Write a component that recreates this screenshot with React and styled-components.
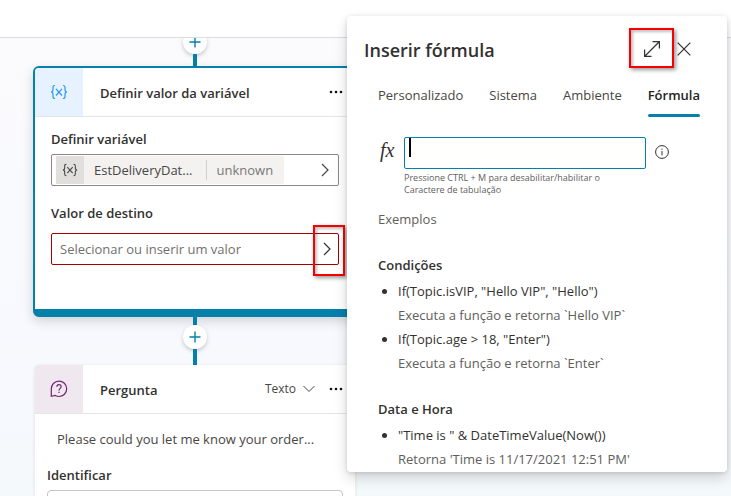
import styled, { createGlobalStyle } from "styled-components";

export default function App() {
  return (
    <>
      <GlobalStyle />
      <Page>
        <TopBar />
        <Canvas>
          <Flow>
            <AddStep before={0} after={12} clipped />
            <SelectedCard>
              <CardHeader>
                <CardIcon $background="#e6f2ff" $color="#2f96f3">
                  <VariableIcon size={18} />
                </CardIcon>
                <CardTitle>Definir valor da variável</CardTitle>
                <MoreButton />
              </CardHeader>
              <CardBody>
                <Label as="span" id="variable-label">
                  Definir variável
                </Label>
                <VariablePicker aria-labelledby="variable-label">
                  <Token>
                    <TokenIcon>
                      <VariableIcon size={16} />
                    </TokenIcon>
                    <TokenName>EstDeliveryDat...</TokenName>
                    <TokenType>unknown</TokenType>
                  </Token>
                  <ChevronRight />
                </VariablePicker>
                <Label htmlFor="target">Valor de destino</Label>
                <TargetField>
                  <TargetInput
                    id="target"
                    placeholder="Selecionar ou inserir um valor"
                  />
                  <TargetButton aria-label="Abrir seletor">
                    <ChevronRight />
                  </TargetButton>
                </TargetField>
              </CardBody>
            </SelectedCard>
            <AddStep before={8} after={16} />
            <QuestionCard>
              <CardHeader>
                <CardIcon $background="#efe8ef" $color="#742774">
                  <QuestionIcon />
                </CardIcon>
                <CardTitle>Pergunta</CardTitle>
                <TypeButton>
                  Texto
                  <ChevronDown />
                </TypeButton>
                <MoreButton />
              </CardHeader>
              <QuestionBody>
                <Message>Please could you let me know your order...</Message>
                <Label htmlFor="identify">Identificar</Label>
                <IdentifyInput id="identify" />
              </QuestionBody>
            </QuestionCard>
          </Flow>
        </Canvas>
        <FormulaPanel />
      </Page>
    </>
  );
}

const tabs = ["Personalizado", "Sistema", "Ambiente", "Fórmula"];

const examples = [
  {
    title: "Condições",
    items: [
      {
        code: 'If(Topic.isVIP, "Hello VIP", "Hello")',
        result: "Executa a função e retorna `Hello VIP`",
      },
      {
        code: 'If(Topic.age > 18, "Enter")',
        result: "Executa a função e retorna `Enter`",
      },
    ],
  },
  {
    title: "Data e Hora",
    items: [
      {
        code: '"Time is " & DateTimeValue(Now())',
        result: "Retorna 'Time is 11/17/2021 12:51 PM'",
      },
    ],
  },
];

function FormulaPanel() {
  return (
    <Panel>
      <PanelHeader>
        <PanelTitle>Inserir fórmula</PanelTitle>
        <ExpandButton aria-label="Expandir">
          <svg width="16" height="16" viewBox="0 0 16 16" {...stroke}>
            <path d="M1 15 15 1M8.500.6h6.900v6.900M.6 8.500v6.900h6.900" />
          </svg>
        </ExpandButton>
        <CloseButton aria-label="Fechar">
          <svg width="14" height="14" viewBox="0 0 14 14" {...stroke}>
            <path d="m.7.7 12.6 12.6M13.3.7.7 13.3" />
          </svg>
        </CloseButton>
      </PanelHeader>
      <Tabs role="tablist">
        {tabs.map((tab) => (
          <Tab
            key={tab}
            role="tab"
            aria-selected={tab === "Fórmula"}
            $active={tab === "Fórmula"}
          >
            {tab}
          </Tab>
        ))}
      </Tabs>
      <FormulaRow>
        <Fx htmlFor="formula">fx</Fx>
        <FormulaField>
          <FormulaInput id="formula" aria-describedby="formula-hint" />
          <Caret />
          <Hint id="formula-hint">
            Pressione CTRL + M para desabilitar/habilitar o Caractere de
            tabulação
          </Hint>
        </FormulaField>
        <InfoButton aria-label="Informações">
          <svg width="14" height="14" viewBox="0 0 14 14" {...stroke}>
            <circle cx="7" cy="7" r="6.4" strokeWidth="1" />
            <path d="M7 6v4.3M7 3.6v1.2" strokeWidth="1" />
          </svg>
        </InfoButton>
      </FormulaRow>
      <Examples>
        <ExamplesTitle>Exemplos</ExamplesTitle>
        {examples.map(({ title, items }) => (
          <section key={title}>
            <GroupTitle>{title}</GroupTitle>
            <ExampleList>
              {items.map(({ code, result }) => (
                <li key={code}>
                  {code}
                  <Result>{result}</Result>
                </li>
              ))}
            </ExampleList>
          </section>
        ))}
      </Examples>
    </Panel>
  );
}

function AddStep({ before, after, clipped }) {
  return (
    <Connector $clipped={clipped}>
      <Line $height={before} />
      <AddButton aria-label="Adicionar nó">
        <svg width="12" height="12" viewBox="0 0 12 12" {...stroke}>
          <path d="M6 .5v11M.5 6h11" strokeWidth="1.4" />
        </svg>
      </AddButton>
      <Line $height={after} />
    </Connector>
  );
}

const stroke = {
  fill: "none",
  stroke: "currentColor",
  strokeWidth: 1.2,
  "aria-hidden": true,
};

function VariableIcon({ size }) {
  return (
    <svg width={size} height={size} viewBox="0 0 18 18" {...stroke}>
      <path d="M5 2.5c-1.8 0-2 .7-2 2v2C3 8 2.5 9 1 9c1.5 0 2 1 2 2.5v2c0 1.3.2 2 2 2M13 2.5c1.8 0 2 .7 2 2v2C15 8 15.5 9 17 9c-1.5 0-2 1-2 2.5v2c0 1.3-.2 2-2 2" />
      <path d="m6 5.8 6 6.7M12 5.8l-6 6.7" />
    </svg>
  );
}

function QuestionIcon() {
  return (
    <svg width="18" height="18" viewBox="0 0 18 18" {...stroke}>
      <path d="M1.3 16.3V9A7.7 7.7 0 1 1 9 16.5c-1.4 0-2.6-.4-3.7-1z" />
      <path d="M6.9 6.8C6.9 5.4 7.8 4.6 9 4.6s2.2.8 2.2 2c0 1.7-2.2 1.8-2.2 3.9M9 11.7v1.4" />
    </svg>
  );
}

function ChevronRight() {
  return (
    <svg width="8" height="14" viewBox="0 0 8 14" {...stroke}>
      <path d="m1 1 6 6-6 6" />
    </svg>
  );
}

function ChevronDown() {
  return (
    <svg width="12" height="8" viewBox="0 0 12 8" {...stroke} strokeWidth="1">
      <path d="m.5 1 5.5 5.5L11.5 1" />
    </svg>
  );
}

function MoreButton() {
  return (
    <MoreIconButton aria-label="Mais">
      <svg width="14" height="4" viewBox="0 0 14 4" fill="#111" aria-hidden>
        <circle cx="2" cy="2" r="1.3" />
        <circle cx="7" cy="2" r="1.3" />
        <circle cx="12" cy="2" r="1.3" />
      </svg>
    </MoreIconButton>
  );
}

const GlobalStyle = createGlobalStyle`
  * {
    box-sizing: border-box;
  }

  body {
    margin: 0;
    overflow: hidden;
    color: #323130;
    font-family: "Open Sans", sans-serif;
    font-size: 13px;
    line-height: 20px;
  }

  button,
  input {
    border: none;
    padding: 0;
    background: none;
    color: inherit;
    font: inherit;
    outline: none;
  }

  svg {
    display: block;
    flex: none;
  }
`;

const Page = styled.div`
  display: flex;
  flex-direction: column;
  position: relative;
  height: 100vh;
  overflow: hidden;
`;

const TopBar = styled.header`
  flex: none;
  height: 38px;
  background: #fff;
  border-bottom: 1px solid #dcdcde;
`;

const Canvas = styled.main`
  flex: 1;
  overflow: hidden;
  padding-left: 33px;
  background: linear-gradient(#fbfbfd, #f8f9fe 60%, #f4f9fc);
`;

const Flow = styled.div`
  display: flex;
  flex-direction: column;
  width: 324px;
`;

const Connector = styled.div`
  display: flex;
  flex-direction: column;
  align-items: center;
  margin-top: ${({ $clipped }) => ($clipped ? "-8px" : "0")};
`;

const Line = styled.div`
  width: 4px;
  height: ${({ $height }) => $height}px;
  background: #0480ab;
`;

const AddButton = styled.button`
  display: grid;
  place-items: center;
  width: 24px;
  height: 24px;
  border-radius: 50%;
  background: #fff;
  color: #0480ab;
  box-shadow: 0 2px 4px rgba(0, 0, 0, 0.2);
`;

const SelectedCard = styled.section`
  border: 2px solid #0480ab;
  border-bottom-width: 8px;
  border-radius: 6px;
  background: #fff;
  box-shadow: 0 4px 12px rgba(0, 0, 0, 0.16);
`;

const QuestionCard = styled.section`
  margin: 0 1px;
  border: solid #eeeef2;
  border-width: 0 1px;
  border-radius: 6px 6px 0 0;
  background: #fff;
  box-shadow: 0 0 3px rgba(0, 0, 0, 0.08);
`;

const CardHeader = styled.header`
  display: flex;
  align-items: center;
  height: 49px;
  padding-right: 12px;
  border-bottom: 1px solid #e6e6e6;
`;

const CardIcon = styled.div`
  display: grid;
  place-items: center;
  align-self: stretch;
  width: 48px;
  border-top-left-radius: 4px;
  background: ${({ $background }) => $background};
  color: ${({ $color }) => $color};
`;

const CardTitle = styled.h2`
  flex: 1;
  margin: 0;
  padding: 2px 0 0 17px;
  font-size: 13px;
  font-weight: 600;
`;

const MoreIconButton = styled.button`
  display: grid;
  place-items: center;
  width: 14px;
  height: 32px;
`;

const TypeButton = styled.button`
  display: flex;
  align-items: center;
  gap: 7px;
  padding-right: 14px;
  color: #484644;
  font-size: 12px;
`;

const CardBody = styled.div`
  display: flex;
  flex-direction: column;
  padding: 12px 16px 44px;
`;

const Label = styled.label`
  margin-bottom: 5px;
  font-weight: 600;
`;

const VariablePicker = styled.button`
  display: flex;
  align-items: center;
  justify-content: space-between;
  height: 32px;
  margin-bottom: 17px;
  padding: 1px 9px 1px 4px;
  border: 1px solid #8a8886;
  border-radius: 2px;
  color: #484644;
`;

const Token = styled.span`
  display: flex;
  align-items: center;
  height: 28px;
  border-radius: 2px;
  background: #f3f2f1;
`;

const TokenIcon = styled.span`
  display: grid;
  place-items: center;
  align-self: stretch;
  width: 28px;
  background: #e1dfdd;
`;

const TokenName = styled.span`
  padding: 0 13px 0 10px;
`;

const TokenType = styled.span`
  padding: 0 11px 0 10px;
  border-left: 1px solid #d2d0ce;
  color: #797775;
`;

const TargetField = styled.div`
  display: flex;
  height: 32px;
  margin-top: 5px;
  border: 1px solid #a80000;
  border-radius: 2px;
`;

const TargetInput = styled.input`
  flex: 1;
  min-width: 0;
  padding-left: 8px;

  &::placeholder {
    color: #72706e;
  }
`;

/* red frame with a drop shadow that calls out a control */
const Highlighted = styled.button`
  display: grid;
  place-items: center;
  position: relative;

  &::after {
    content: "";
    position: absolute;
    border: 2px solid #f80000;
    box-shadow:
      2px 2px 4px rgba(0, 0, 0, 0.4),
      inset 2px 2px 3px rgba(0, 0, 0, 0.25);
  }
`;

const TargetButton = styled(Highlighted)`
  width: 22px;

  &::after {
    inset: -9px -7px -12px -3px;
  }
`;

const QuestionBody = styled.div`
  display: flex;
  flex-direction: column;
  padding: 15px 12px 0;
`;

const Message = styled.p`
  margin: 0 0 16px;
  padding-left: 10px;
  color: #484644;
`;

const IdentifyInput = styled.input`
  height: 32px;
  border: 1px solid #c8c6c4;
  border-radius: 4px;
`;

const Panel = styled.aside`
  position: absolute;
  top: 16px;
  right: 4px;
  width: 380px;
  height: 456px;
  overflow: hidden;
  border-radius: 4px;
  background: #fff;
  box-shadow:
    0 6px 14px rgba(0, 0, 0, 0.16),
    0 1px 4px rgba(0, 0, 0, 0.12);
`;

const PanelHeader = styled.header`
  display: flex;
  align-items: center;
  height: 66px;
  padding: 0 27px 0 17px;
`;

const PanelTitle = styled.h1`
  flex: 1;
  margin: 0;
  padding-top: 2px;
  font-size: 18px;
  font-weight: 600;
`;

const ExpandButton = styled(Highlighted)`
  width: 32px;
  height: 32px;

  &::after {
    inset: -5px -6px -3px -7px;
  }
`;

const CloseButton = styled.button`
  display: grid;
  place-items: center;
  width: 32px;
  height: 32px;
`;

const Tabs = styled.div`
  display: flex;
  justify-content: space-between;
  padding: 0 27px 0 31px;
`;

const Tab = styled.button`
  display: flex;
  flex-direction: column;
  justify-content: space-between;
  height: 35px;
  padding-top: 3px;
  color: ${({ $active }) => ($active ? "#252423" : "#484644")};
  font-weight: ${({ $active }) => ($active ? 600 : 400)};

  &::after {
    content: "";
    width: 100%;
    height: 3px;
    border-radius: 2px;
    background: ${({ $active }) => ($active ? "#0480ab" : "transparent")};
  }
`;

const FormulaRow = styled.div`
  display: flex;
  padding: 20px 58px 0 31px;
`;

const Fx = styled.label`
  width: 26px;
  padding-left: 2px;
  font: italic 20px/26px "Liberation Serif", serif;
`;

const FormulaField = styled.div`
  flex: 1;
  position: relative;
`;

const FormulaInput = styled.input`
  display: block;
  width: 100%;
  height: 32px;
  padding: 0 12px;
  border: 1px solid #0480ab;
  border-radius: 2px;
  background: #fffffe;
`;

const Caret = styled.span`
  position: absolute;
  top: 1px;
  left: 5px;
  width: 2px;
  height: 19px;
  background: #000;
`;

const Hint = styled.p`
  margin: 3px 0 0;
  padding-right: 24px;
  color: #605e5c;
  font-size: 9px;
  line-height: 12px;
`;

const InfoButton = styled.button`
  display: grid;
  place-items: center;
  height: 30px;
  margin-left: 9px;
`;

const Examples = styled.div`
  padding: 13px 31px 0;
`;

const ExamplesTitle = styled.p`
  margin: 0 0 26px;
  color: #605e5c;
`;

const GroupTitle = styled.h3`
  margin: 24px 0 4px;
  font-size: 13px;
  font-weight: 600;
`;

const ExampleList = styled.ul`
  margin: 0;
  padding-left: 20px;
  line-height: 24px;
`;

const Result = styled.div`
  color: #605e5c;
`;
